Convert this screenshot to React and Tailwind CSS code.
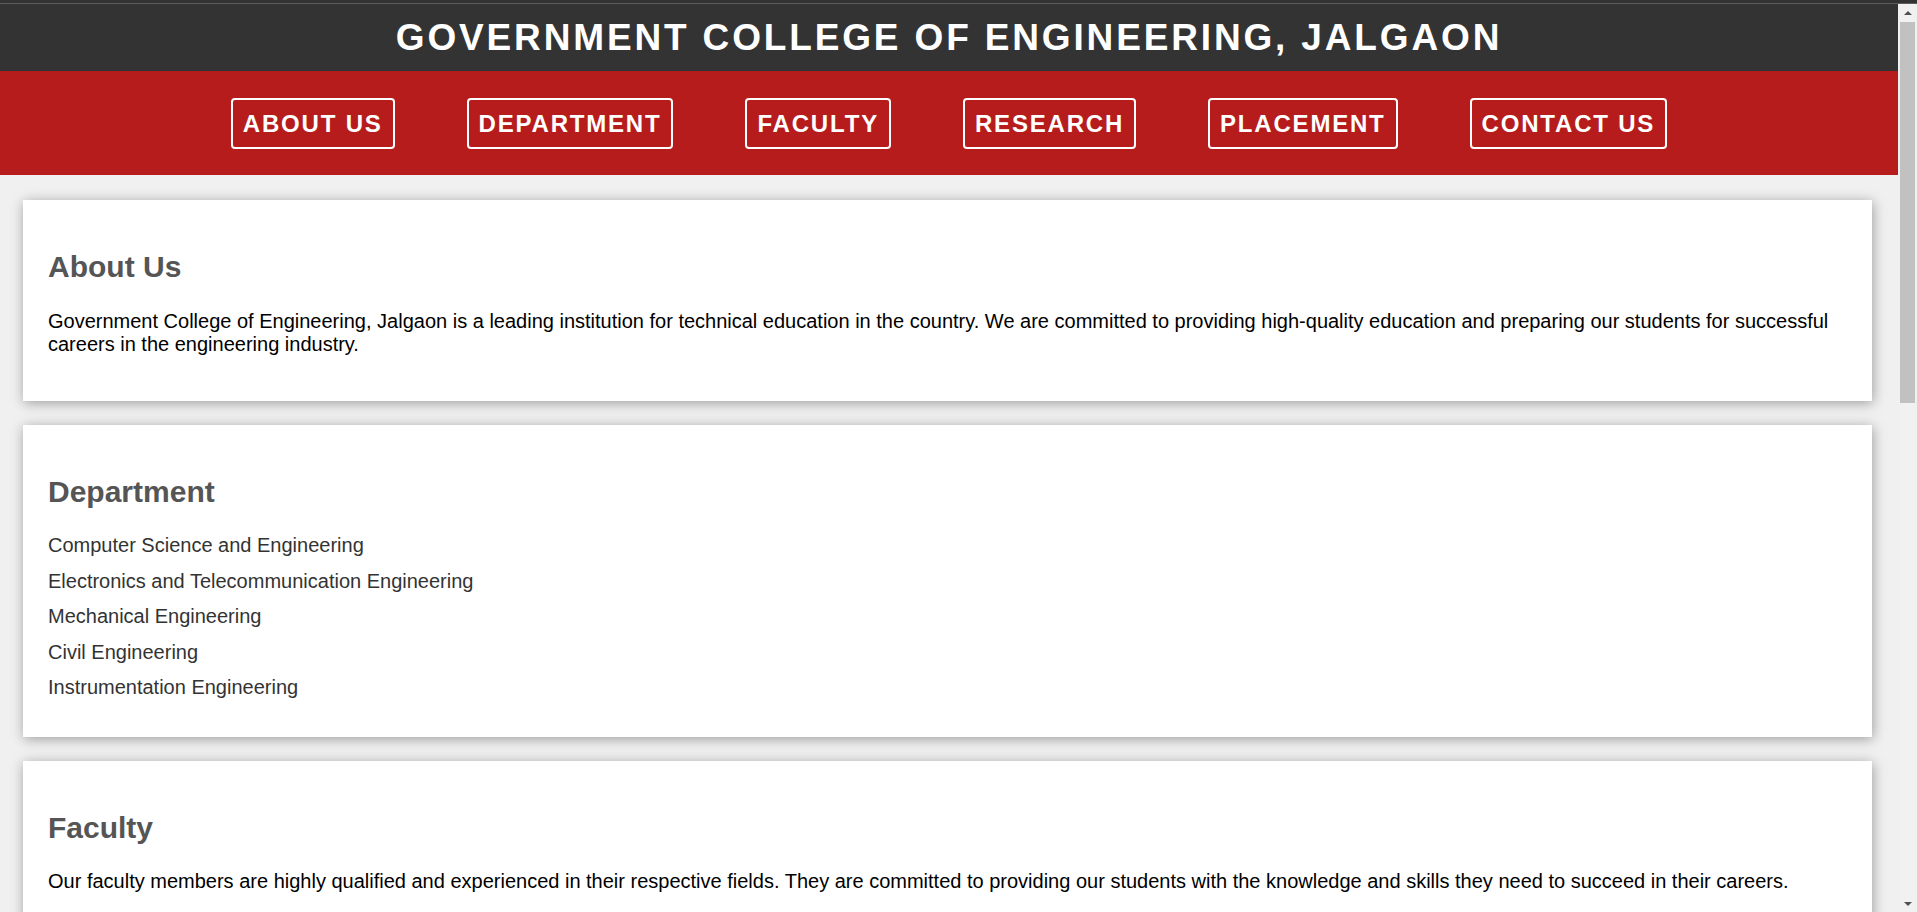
import React from 'react';

const navItems = ['About Us', 'Department', 'Faculty', 'Research', 'Placement', 'Contact Us'];

const departments = [
  'Computer Science and Engineering',
  'Electronics and Telecommunication Engineering',
  'Mechanical Engineering',
  'Civil Engineering',
  'Instrumentation Engineering',
];

function Section({ title, children }) {
  return (
    <section className="bg-white px-[25px] py-[25px] shadow-[1px_2px_12px_rgba(0,0,0,0.35)]">
      <h2 className="text-[30px] leading-[34.5px] font-bold text-[#555555] my-[25px]">{title}</h2>
      {children}
    </section>
  );
}

// browser scrollbar, as seen in the screenshot
function Scrollbar() {
  return (
    <aside className="sticky top-0 self-start h-[908px] w-[19px] shrink-0 bg-[#f1f1f1] flex flex-col">
      <div className="h-[17px] flex items-center justify-center">
        <div className="w-0 h-0 border-x-[4px] border-x-transparent border-b-[4px] border-b-[#505050]" />
      </div>
      <div className="mt-[1px] h-[381px] mx-[2px] bg-[#c1c1c1]" />
      <div className="flex-1" />
      <div className="h-[17px] flex items-center justify-center">
        <div className="w-0 h-0 border-x-[4px] border-x-transparent border-t-[4px] border-t-[#505050]" />
      </div>
    </aside>
  );
}

export default function App() {
  return (
    <div className="min-h-screen bg-[#f0f0f0] font-['Liberation_Sans',Arial,sans-serif] text-black">
      <div className="h-[3px] bg-[#333333]" />
      <div className="h-px bg-[#5c5c5c]" />
      <div className="flex">
        <div className="flex-1 min-w-0">
          <header className="h-[67px] bg-[#333333] flex items-center justify-center">
            <h1 className="text-[37px] leading-[42px] font-bold text-white tracking-[2.85px] uppercase">
              Government College of Engineering, Jalgaon
            </h1>
          </header>

          <nav className="h-[104px] bg-[#b71c1c] flex items-center justify-center gap-[72px]">
            {navItems.map((item) => (
              <a
                key={item}
                href="#"
                className="border-2 border-white rounded-[4px] px-[10px] py-[10px] text-[24px] leading-[27px] font-bold text-white uppercase tracking-[1.8px]"
              >
                {item}
              </a>
            ))}
          </nav>

          <main className="pl-[23px] pr-[26px] pt-[25px] pb-[25px] flex flex-col gap-[24px]">
            <Section title="About Us">
              <p className="text-[20px] leading-[23px] mb-[20px]">
                Government College of Engineering, Jalgaon is a leading institution for technical education in the country. We are committed to providing high-quality education and preparing our students for successful careers in the engineering industry.
              </p>
            </Section>

            <Section title="Department">
              <ul className="flex flex-col">
                {departments.map((d) => (
                  <li key={d} className="text-[20px] leading-[23px] text-[#333333] mb-[12.5px]">{d}</li>
                ))}
              </ul>
            </Section>

            <Section title="Faculty">
              <p className="text-[20px] leading-[23px] mb-[20px]">
                Our faculty members are highly qualified and experienced in their respective fields. They are committed to providing our students with the knowledge and skills they need to succeed in their careers.
              </p>
            </Section>

            <Section title="Research">
              <p className="text-[20px] leading-[23px] mb-[20px]">
                Our college encourages research and innovation in all fields of engineering. Students and faculty work together on projects that address real-world problems.
              </p>
            </Section>

            <Section title="Placement">
              <p className="text-[20px] leading-[23px] mb-[20px]">
                Our placement cell works closely with leading companies to provide our students with excellent career opportunities.
              </p>
            </Section>

            <Section title="Contact Us">
              <p className="text-[20px] leading-[23px] mb-[20px]">
                Government College of Engineering, Jalgaon, Maharashtra, India.
              </p>
            </Section>
          </main>
        </div>
        <Scrollbar />
      </div>
    </div>
  );
}
